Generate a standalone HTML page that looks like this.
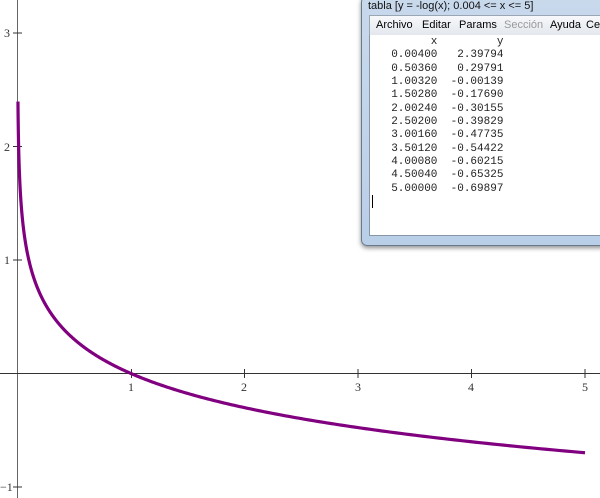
<!DOCTYPE html>
<html><head><meta charset="utf-8"><style>
body{margin:0;width:600px;height:498px;overflow:hidden;background:#fff;position:relative;font-family:"Liberation Sans",sans-serif}
svg{position:absolute;left:0;top:0}
.lbl{font-family:"Liberation Serif",serif;font-size:12px;fill:#333}
#win{position:absolute;left:361px;top:-4px;width:245px;height:248px;background:linear-gradient(#c9d9ec,#b9cfe8);border:1px solid #6a7a8c;border-radius:6px;box-shadow:0 2px 5px rgba(0,0,0,.45)}
#title{position:absolute;left:368px;top:0;font-size:11px;color:#111;font-family:"Liberation Sans",sans-serif}
#menu{position:absolute;left:369px;top:15px;width:240px;height:19px;background:linear-gradient(#f7f8fa,#e4e8ee);border:1px solid #9aa6b4;font-size:11px;font-family:"Liberation Sans",sans-serif}
#menu span{position:absolute;top:3px}
#content{position:absolute;left:369px;top:35px;width:240px;height:200px;background:#fff;border:1px solid #8895a5;border-top:none}
pre{position:absolute;left:378px;top:36px;margin:0;font-family:"Liberation Mono",monospace;font-size:11px;line-height:13.35px;color:#222}
#cur{position:absolute;left:372px;top:195px;width:1px;height:13px;background:#000}
</style></head><body>
<svg width="600" height="498">
<line x1="17.5" y1="0" x2="17.5" y2="498" stroke="#666" stroke-width="1"/>
<line x1="0" y1="373.5" x2="600" y2="373.5" stroke="#333" stroke-width="1"/>
<g stroke="#333">
<line x1="13" y1="33" x2="22" y2="33"/><line x1="13" y1="146.5" x2="22" y2="146.5"/><line x1="13" y1="260" x2="22" y2="260"/><line x1="13" y1="487" x2="22" y2="487"/>
<line x1="131.5" y1="369" x2="131.5" y2="378"/><line x1="244.5" y1="369" x2="244.5" y2="378"/><line x1="358" y1="369" x2="358" y2="378"/><line x1="471.5" y1="369" x2="471.5" y2="378"/><line x1="585" y1="369" x2="585" y2="378"/>
</g>
<text class="lbl" x="4" y="37">3</text><text class="lbl" x="4" y="151">2</text><text class="lbl" x="4" y="264">1</text><text class="lbl" x="0" y="491">−1</text>
<text class="lbl" x="128" y="391">1</text><text class="lbl" x="241" y="391">2</text><text class="lbl" x="355" y="391">3</text><text class="lbl" x="468" y="391">4</text><text class="lbl" x="582" y="391">5</text>
<path id="c" fill="none" stroke="#800080" stroke-width="3.2" d=""/>
</svg>
<div id="win"></div>
<div id="title">tabla [y = -log(x); 0.004 &lt;= x &lt;= 5]</div>
<div id="menu"><span style="left:6px">Archivo</span><span style="left:52px">Editar</span><span style="left:89px">Params</span><span style="left:134px;color:#999">Sección</span><span style="left:180px">Ayuda</span><span style="left:216px">Ce</span></div>
<div id="content"></div>
<pre>        x         y
  0.00400   2.39794
  0.50360   0.29791
  1.00320  -0.00139
  1.50280  -0.17690
  2.00240  -0.30155
  2.50200  -0.39829
  3.00160  -0.47735
  3.50120  -0.54422
  4.00080  -0.60215
  4.50040  -0.65325
  5.00000  -0.69897</pre>
<div id="cur"></div>
<script>
var d="";
for(var i=0;i<=600;i++){var x=0.004*Math.pow(5/0.004,i/600);var px=17.5+x*113.5,py=373.5-(-Math.log10(x))*113.4;d+=(i?"L":"M")+px.toFixed(2)+" "+py.toFixed(2);}
document.getElementById("c").setAttribute("d",d);
</script>
</body></html>
